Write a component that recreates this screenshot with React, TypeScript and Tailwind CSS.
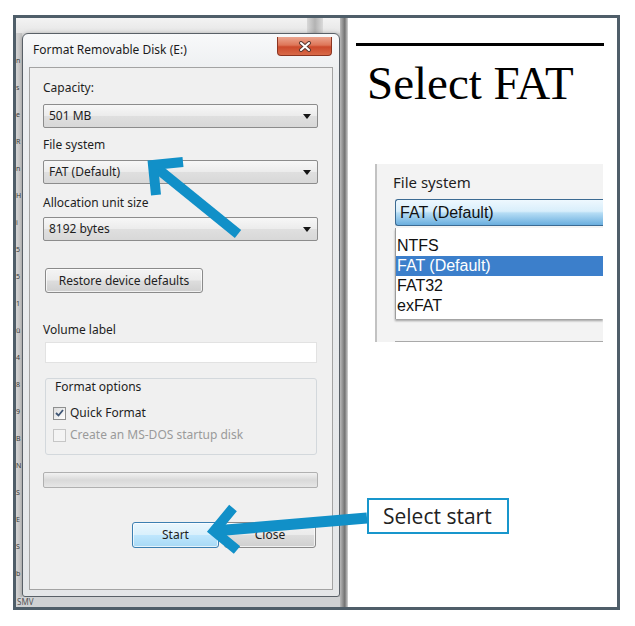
import React from "react"

const ui = "font-['Noto_Sans','Open_Sans',sans-serif]"

function Combo({ value }: { value: string }) {
  return (
    <div className="h-[24px] shrink-0 flex items-center justify-between pl-[5px] pr-[6px] rounded-[2px] border border-[#8c8c8c] bg-[linear-gradient(to_bottom,#f7f7f7_0%,#ececec_48%,#dfdfdf_52%,#d8d8d8_100%)] text-[12px] leading-[16px] text-[#1e1e1e]">
      <span>{value}</span>
      <svg width="8" height="5" viewBox="0 0 8 5">
        <path d="M0 0h8L4 5z" fill="#151515" />
      </svg>
    </div>
  )
}

function WinButton({ label, hot, className = "" }: { label: string; hot?: boolean; className?: string }) {
  const skin = hot
    ? "border-[#3c7fb1] bg-[linear-gradient(to_bottom,#eaf6fd_0%,#d9f0fc_48%,#bee6fd_52%,#a7d9f5_100%)]"
    : "border-[#8a8a8a] bg-[linear-gradient(to_bottom,#f4f4f4_0%,#ebebeb_48%,#dddddd_52%,#cfcfcf_100%)]"
  return (
    <div
      className={`flex items-center justify-center rounded-[3px] border text-[12px] leading-[16px] text-[#1e1e1e] shadow-[inset_0_0_0_1px_rgba(255,255,255,0.7)] ${skin} ${className}`}
    >
      {label}
    </div>
  )
}

function CheckRow({ label, checked, disabled }: { label: string; checked?: boolean; disabled?: boolean }) {
  return (
    <div className="h-[16px] flex items-center gap-[4px]">
      <div
        className={`w-[13px] h-[13px] flex items-center justify-center border ${
          disabled
            ? "border-[#c6c6c6] bg-[#f4f4f4]"
            : "border-[#8e8f8f] bg-[linear-gradient(135deg,#dcdcdc,#ffffff)]"
        }`}
      >
        {checked && (
          <svg width="9" height="8" viewBox="0 0 9 8">
            <path d="M1 4l2.5 2.5L8 1" stroke="#3f5675" strokeWidth="1.8" fill="none" />
          </svg>
        )}
      </div>
      <span className={`text-[12px] leading-[16px] ${disabled ? "text-[#9a9a9a]" : "text-[#1e1e1e]"}`}>{label}</span>
    </div>
  )
}

function CloseButton() {
  return (
    <div className="mt-[3px] mr-[1px] w-[55px] h-[19px] flex items-center justify-center rounded-b-[4px] border border-t-0 border-[#8b3420] bg-[linear-gradient(to_bottom,#eba58f_0%,#de7658_45%,#cc4a2c_55%,#d86a48_100%)]">
      <svg width="14" height="11" viewBox="0 0 14 11">
        <path d="M3 2l8 7M11 2l-8 7" stroke="#5a3a32" strokeWidth="4" strokeLinecap="round" />
        <path d="M3 2l8 7M11 2l-8 7" stroke="#ffffff" strokeWidth="2" strokeLinecap="round" />
      </svg>
    </div>
  )
}

function Dialog() {
  return (
    <div className="w-[318px] h-full flex flex-col rounded-t-[6px] rounded-b-[3px] border border-[#596067] bg-[linear-gradient(to_bottom,#f8f9fa,#eceef0_40px,#e4e6e8)] px-[6px] pb-[6px] shadow-[1px_1px_5px_rgba(0,0,0,0.35)]">
      <div className="h-[33px] shrink-0 flex items-start justify-between">
        <span className="mt-[8px] ml-[4px] text-[12px] leading-[16px] text-[#1b1b1b]">Format Removable Disk (E:)</span>
        <CloseButton />
      </div>

      <div className="flex-1 flex flex-col border border-[#a3a3a3] bg-[#f0f0f0] pl-[13px] pr-[14px]">
        <span className="mt-[12px] text-[12px] leading-[16px] text-[#1e1e1e]">Capacity:</span>
        <div className="mt-[8px]">
          <Combo value="501 MB" />
        </div>
        <span className="mt-[9px] text-[12px] leading-[16px] text-[#1e1e1e]">File system</span>
        <div className="mt-[7px]">
          <Combo value="FAT (Default)" />
        </div>
        <span className="mt-[11px] text-[12px] leading-[16px] text-[#1e1e1e]">Allocation unit size</span>
        <div className="mt-[6px]">
          <Combo value="8192 bytes" />
        </div>

        <WinButton label="Restore device defaults" className="mt-[27px] ml-[2px] w-[158px] h-[25px]" />

        <span className="mt-[29px] text-[12px] leading-[16px] text-[#1e1e1e]">Volume label</span>
        <div className="mt-[4px] ml-[2px] mr-[1px] h-[21px] bg-white border border-[#e2e2e2]" />

        <div className="mt-[15px] ml-[2px] mr-[1px] h-[77px] flex flex-col rounded-[3px] border border-[#d3d8dc] pl-[7px]">
          <span className="ml-[2px] text-[12px] leading-[16px] text-[#1e1e1e]">Format options</span>
          <div className="mt-[10px]">
            <CheckRow label="Quick Format" checked />
          </div>
          <div className="mt-[6px]">
            <CheckRow label="Create an MS-DOS startup disk" disabled />
          </div>
        </div>

        <div className="mt-[17px] h-[16px] rounded-[2px] border border-[#b0b0b0] bg-[linear-gradient(to_bottom,#f2f2f2,#d9d9d9_50%,#e6e6e6)]" />

        <div className="mt-[34px] flex gap-[5px]">
          <WinButton label="Start" hot className="ml-[89px] w-[87px] h-[26px]" />
          <WinButton label="Close" className="w-[92px] h-[26px]" />
        </div>
      </div>
    </div>
  )
}

function BackdropText() {
  const letters = ["n", "s", "e", "R", "n", "H", "i", "5", "5", "1", "ü", "4", "8", "9", "B", "N", "S", "E", "S", "b"]
  return (
    <div className="w-[6px] h-full overflow-hidden bg-[linear-gradient(to_right,#d3d3d3,#c4c4c4)]">
      <div className="pt-[14px] flex flex-col text-[7px] leading-[27px] text-[#3a3a3a]">
        {letters.map((l, i) => (
          <span key={i}>{l}</span>
        ))}
      </div>
    </div>
  )
}

function Screenshot() {
  return (
    <div className={`w-[332px] h-full flex bg-[#dadada] ${ui}`}>
      <div className="w-[324px] flex flex-col">
        <div className="h-[15px] shrink-0 flex bg-[linear-gradient(to_bottom,#f3f3f3,#e6e6e6)]">
          <div className="ml-[291px] w-[16px] bg-[linear-gradient(to_right,#d8d8d8,#b3b3b3,#dadada)]" />
        </div>
        <div className="flex h-[564px] shrink-0">
          <BackdropText />
          <Dialog />
        </div>
        <div className="flex-1 bg-[#cfd1d3] pl-[1px]">
          <span className="block text-[8px] leading-[10px] text-[#555]">SMV</span>
        </div>
      </div>
      <div className="w-[8px] bg-[linear-gradient(to_right,#b9b9b9,#727272_60%,#d4d4d4)]" />
    </div>
  )
}

function DropdownInset() {
  const items = ["NTFS", "FAT (Default)", "FAT32", "exFAT"]
  return (
    <div className="ml-[27px] mt-[57px] w-[228px] h-[178px] flex flex-col overflow-hidden bg-[#f3f3f3] border-l-2 border-[#c2c2c2] pl-[16px]">
      <span className={`pt-[8px] text-[15px] leading-[20px] text-[#1e1e1e] ${ui}`}>File system</span>
      <div className="mt-[7px] ml-[2px] h-[27px] shrink-0 flex items-center rounded-l-[3px] border border-r-0 border-[#3b6a92] bg-[linear-gradient(to_bottom,#eef8fe_0%,#d8eefb_45%,#b6ddf5_52%,#6aaede_100%)] pl-[4px] font-['Liberation_Sans',Arial,sans-serif] text-[16px] text-[#111]">
        FAT (Default)
      </div>
      <div className="mt-[2px] ml-[2px] pt-[8px] pb-[3px] flex flex-col bg-white border-l border-[#9c9c9c] shadow-[0_2px_2px_rgba(0,0,0,0.35)] font-['Liberation_Sans',Arial,sans-serif] text-[16px] leading-[20px]">
        {items.map((it, i) => (
          <span key={it} className={`h-[20px] pl-[1px] ${i === 1 ? "bg-[#3c7fcb] text-white" : "text-[#111]"}`}>
            {it}
          </span>
        ))}
      </div>
      <div className="mt-[22px] ml-[2px] h-[1px] shrink-0 bg-[#a9a9a9]" />
    </div>
  )
}

function RightPanel() {
  return (
    <div className="flex-1 flex flex-col bg-white">
      <div className="ml-[8px] mt-[25px] w-[248px] h-[3px] bg-black" />
      <div className="ml-[19px] mt-[14px] font-['Liberation_Serif','Times_New_Roman',serif] text-[47px] leading-[47px] text-black">
        Select FAT
      </div>
      <DropdownInset />
      <div className="ml-[19px] mt-[156px] w-[142px] h-[36px] flex items-center border-2 border-[#1896cc] bg-white pl-[14px] font-['Open_Sans','Noto_Sans',sans-serif] text-[21px] leading-none text-[#222]">
        Select start
      </div>
    </div>
  )
}

function Arrows() {
  return (
    <svg className="absolute inset-0 pointer-events-none" width="635" height="626" viewBox="0 0 635 626">
      <g stroke="#1190c8" fill="none" strokeLinejoin="miter">
        <path d="M153 165L238 234" strokeWidth="10" />
        <path d="M183 162L153 165L156 195" strokeWidth="10" />
        <path d="M214 531L367 518" strokeWidth="11" />
        <path d="M233 508L214 531L237 550" strokeWidth="10" />
      </g>
    </svg>
  )
}

export default function App() {
  return (
    <div className="relative w-[635px] h-[626px] bg-white overflow-hidden">
      <div className="ml-[13px] mt-[15px] w-[607px] h-[595px] border-[3px] border-[#4f5e69] flex">
        <Screenshot />
        <RightPanel />
      </div>
      <Arrows />
    </div>
  )
}
